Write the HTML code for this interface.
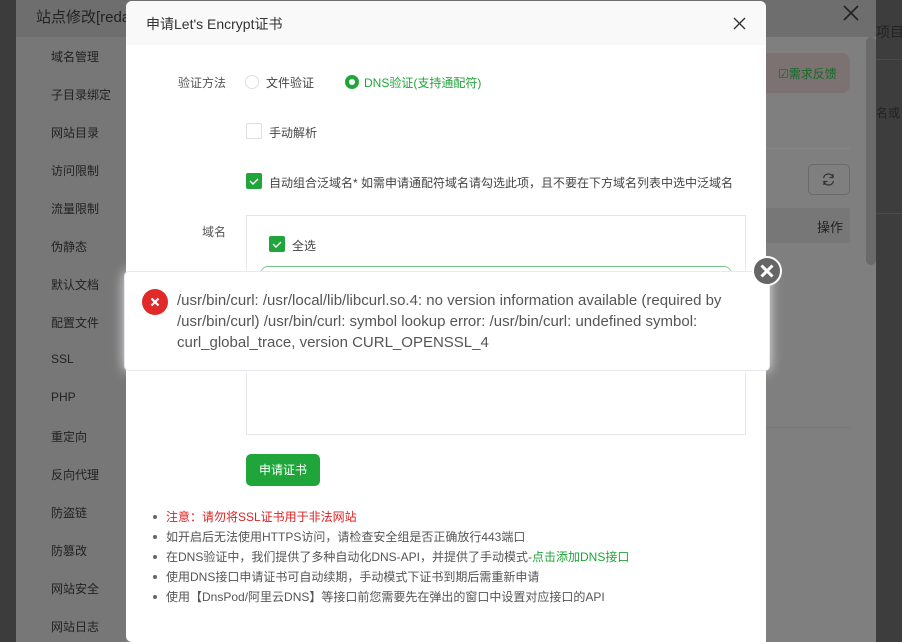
<!DOCTYPE html>
<html><head><meta charset="utf-8"><style>
*{margin:0;padding:0;box-sizing:border-box}
body{width:902px;height:642px;overflow:hidden;position:relative;background:#3c3c3c;font-family:"Liberation Sans","Noto Sans CJK SC",sans-serif;font-size:12px;color:#333}
.abs{position:absolute;white-space:nowrap}
.panel{left:16px;top:0;width:860px;height:642px;background:#7f7f7f}
.ptop{left:16px;top:0;width:860px;height:37px;background:#6e6e6e}
.side{left:16px;top:37px;width:110px;height:605px;background:#777}
.si{position:absolute;left:35px;color:#222;font-size:12px}
.modal{left:126px;top:1px;width:640px;height:641px;background:#fff;border-radius:6px 6px 0 6px;overflow:hidden}
.mh{height:44px;background:#f9f9f9;padding:13px 0 0 20px;font-size:14px;color:#333}
.lbl{position:absolute;color:#555;font-size:12px;text-align:right}
.cb{position:absolute;width:16px;height:16px;border-radius:2px}
.cb.on{background:#20a53a}
.cb.off{border:1px solid #dcdfe6;background:#fff}
.t{position:absolute;font-size:12px;color:#444;white-space:nowrap}
.li{position:absolute;left:40px;font-size:12px;color:#555;white-space:nowrap}
.li:before{content:"";position:absolute;left:-13px;top:7px;width:4px;height:4px;border-radius:50%;background:#666}
</style></head><body>
<div class="abs panel"></div>
<div class="abs ptop"></div>
<div class="abs" style="left:36px;top:6px;font-size:15px;color:#222">站点修改[reda</div>
<div class="abs side">
<div class="si" style="top:11px">域名管理</div>
<div class="si" style="top:49px">子目录绑定</div>
<div class="si" style="top:87px">网站目录</div>
<div class="si" style="top:125px">访问限制</div>
<div class="si" style="top:163px">流量限制</div>
<div class="si" style="top:201px">伪静态</div>
<div class="si" style="top:239px">默认文档</div>
<div class="si" style="top:277px">配置文件</div>
<div class="si" style="top:315px">SSL</div>
<div class="si" style="top:353px">PHP</div>
<div class="si" style="top:391px">重定向</div>
<div class="si" style="top:429px">反向代理</div>
<div class="si" style="top:467px">防盗链</div>
<div class="si" style="top:505px">防篡改</div>
<div class="si" style="top:543px">网站安全</div>
<div class="si" style="top:581px">网站日志</div>
</div>
<svg class="abs" style="left:843px;top:5px" width="16" height="16"><path d="M1 1L15 15M15 1L1 15" stroke="#222" stroke-width="1.6"/></svg>
<div class="abs" style="left:766px;top:53px;width:84px;height:40px;background:#7d7272;border-radius:0 8px 8px 0"></div>
<div class="abs" style="left:778px;top:65px;font-size:12px;color:#136b25">☑需求反馈</div>
<div class="abs" style="left:766px;top:148px;width:84px;height:1px;background:#888"></div>
<div class="abs" style="left:808px;top:164px;width:42px;height:31px;border:1px solid #6a6a6a;border-radius:5px"></div>
<svg class="abs" style="left:821px;top:172px" width="15" height="15"><path d="M2.5 6A5 5 0 0 1 12 5M12.5 9A5 5 0 0 1 3 10" stroke="#333" stroke-width="1.3" fill="none"/><path d="M12 2v3.5H8.5M3 13V9.5h3.5" stroke="#333" stroke-width="1.3" fill="none"/></svg>
<div class="abs" style="left:766px;top:208px;width:84px;height:35px;background:#777"></div>
<div class="abs" style="left:817px;top:217px;font-size:13px;color:#222">操作</div>
<div class="abs" style="left:766px;top:427px;width:84px;height:1px;background:#777"></div>
<div class="abs" style="left:866px;top:37px;width:10px;height:228px;background:#6a6a6a;border-radius:5px"></div>
<div class="abs" style="left:876px;top:0;width:26px;height:642px;background:#3d3d3d"></div>
<div class="abs" style="left:876px;top:22px;font-size:14px;color:#222">项目</div>
<div class="abs" style="left:876px;top:104px;font-size:12px;color:#222">名或</div>
<div class="abs" style="left:876px;top:59px;width:26px;height:1px;background:#4a4a4a"></div>
<div class="abs" style="left:876px;top:213px;width:26px;height:1px;background:#4a4a4a"></div>

<div class="abs modal">
<div class="mh">申请Let's Encrypt证书</div>
<svg class="abs" style="left:607px;top:16px" width="13" height="13"><path d="M1 1L12 12M12 1L1 12" stroke="#333" stroke-width="1.4"/></svg>
<div class="lbl" style="left:30px;top:73px;width:70px">验证方法</div>
<div class="abs" style="left:119px;top:74px;width:14px;height:14px;border:1px solid #dcdfe6;border-radius:50%"></div>
<div class="t" style="left:140px;top:73px">文件验证</div>
<div class="abs" style="left:219px;top:74px;width:14px;height:14px;background:#20a53a;border-radius:50%"><div style="margin:4px;width:6px;height:6px;background:#fff;border-radius:50%"></div></div>
<div class="t" style="left:238px;top:73px;color:#20a53a">DNS验证(支持通配符)</div>
<div class="cb off" style="left:120px;top:122px"></div>
<div class="t" style="left:143px;top:123px">手动解析</div>
<div class="cb on" style="left:120px;top:172px"><svg width="16" height="16"><path d="M4 8l3 3 5-5" stroke="#fff" stroke-width="1.4" fill="none"/></svg></div>
<div class="t" style="left:143px;top:173px">自动组合泛域名* 如需申请通配符域名请勾选此项，且不要在下方域名列表中选中泛域名</div>
<div class="lbl" style="left:30px;top:222px;width:70px">域名</div>
<div class="abs" style="left:120px;top:214px;width:500px;height:220px;border:1px solid #e6e6ea"></div>
<div class="cb on" style="left:143px;top:235px"><svg width="16" height="16"><path d="M4 8l3 3 5-5" stroke="#fff" stroke-width="1.4" fill="none"/></svg></div>
<div class="t" style="left:166px;top:236px">全选</div>
<div class="abs" style="left:134px;top:265px;width:472px;height:20px;border:1px solid #5cb86f;border-radius:8px"></div>
<div class="abs" style="left:120px;top:453px;width:74px;height:32px;background:#20a53a;border-radius:5px;color:#fff;font-size:12px;text-align:center;line-height:32px">申请证书</div>
<div class="li" style="top:507px;color:#e02020">注意：请勿将SSL证书用于非法网站</div>
<div class="li" style="top:527px">如开启后无法使用HTTPS访问，请检查安全组是否正确放行443端口</div>
<div class="li" style="top:547px">在DNS验证中，我们提供了多种自动化DNS-API，并提供了手动模式-<span style="color:#20a53a">点击添加DNS接口</span></div>
<div class="li" style="top:567px">使用DNS接口申请证书可自动续期，手动模式下证书到期后需重新申请</div>
<div class="li" style="top:587px">使用【DnsPod/阿里云DNS】等接口前您需要先在弹出的窗口中设置对应接口的API</div>
</div>

<div class="abs" style="left:124px;top:271px;width:646px;height:100px;background:#fff;border:1px solid #e8e8ee;border-radius:5px;box-shadow:0 0 12px rgba(255,255,255,.8)"></div>
<div class="abs" style="left:142px;top:289px;width:26px;height:26px;background:#e02a2a;border-radius:50%"><svg width="26" height="26"><path d="M9.5 9.5l7 7M16.5 9.5l-7 7" stroke="#fff" stroke-width="2.2"/></svg></div>
<div class="abs" style="left:177px;top:290px;width:580px;white-space:normal;font-size:15px;line-height:21px;color:#555">/usr/bin/curl: /usr/local/lib/libcurl.so.4: no version information available (required by /usr/bin/curl) /usr/bin/curl: symbol lookup error: /usr/bin/curl: undefined symbol: curl_global_trace, version CURL_OPENSSL_4</div>
<div class="abs" style="left:752px;top:256px;width:30px;height:30px;background:#666;border:2px solid #fff;border-radius:50%"><svg width="26" height="26"><path d="M7.5 7.5l11 11M18.5 7.5l-11 11" stroke="#fff" stroke-width="3"/></svg></div>
</body></html>
